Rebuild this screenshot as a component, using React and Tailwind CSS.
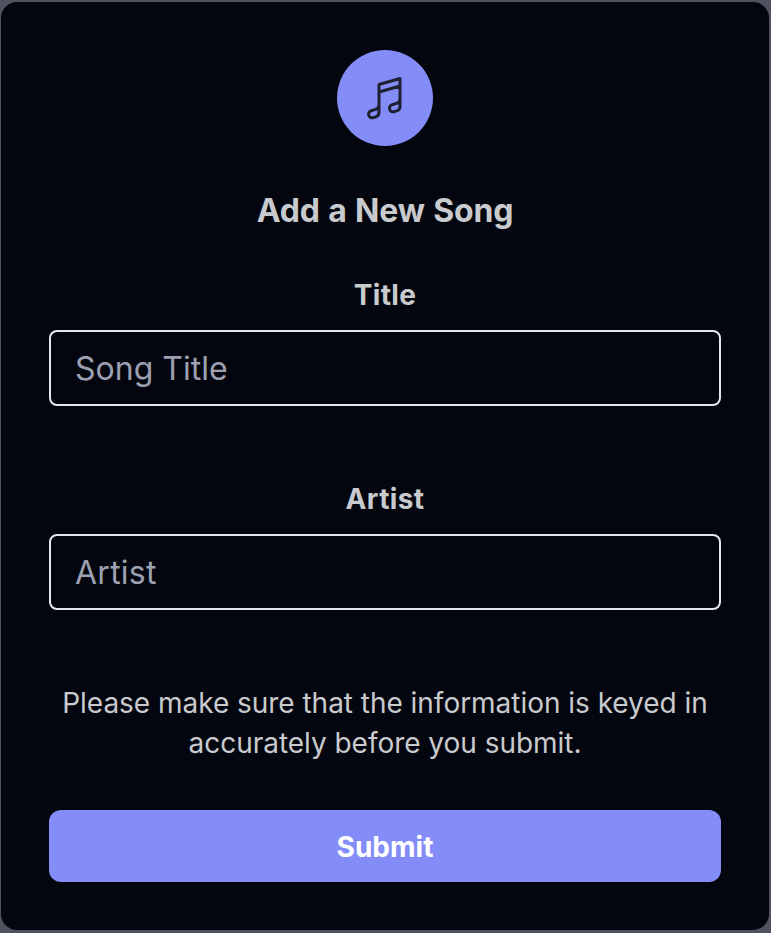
function Field({ label, placeholder, labelClass, inputClass }) {
  return (
    <div className="w-[672px]">
      <label className={`block h-10 text-center text-[28px] leading-10 font-bold ${labelClass}`}>{label}</label>
      <input
        placeholder={placeholder}
        className={`mt-[15px] block h-[76px] w-full rounded-lg border-2 border-[#e5e7eb] bg-transparent px-6 text-[32px] outline-none placeholder:text-[#9ca0b0] ${inputClass}`}
      />
    </div>
  );
}

export default function App() {
  return (
    <div className="h-[933px] w-[771px] bg-[#50525f] pt-0.5 pl-px font-['Inter',sans-serif] text-[#c9cacd]">
      <div className="flex h-[928px] w-[768px] flex-col items-center rounded-2xl bg-[#03060e] pt-12">
        <div className="flex size-24 shrink-0 items-center justify-center rounded-full bg-[#848cf8] text-[#1f2030]">
          <svg className="size-12" viewBox="0 0 24 24" fill="none" stroke="currentColor" strokeWidth="1.5" strokeLinecap="round" strokeLinejoin="round">
            <path d="m9 9 10.5-3m0 6.553v3.75a2.25 2.25 0 0 1-1.632 2.163l-1.32.377a1.803 1.803 0 1 1-.99-3.467l2.31-.66a2.25 2.25 0 0 0 1.632-2.163Zm0 0V2.25L9 5.25v10.303m0 0v3.75a2.25 2.25 0 0 1-1.632 2.163l-1.32.377a1.803 1.803 0 0 1-.99-3.467l2.31-.66A2.25 2.25 0 0 0 9 15.553Z" />
          </svg>
        </div>
        <h3 className="mt-[41px] h-12 text-[32px] leading-12 font-bold tracking-[-0.15px] whitespace-nowrap [word-spacing:1px]">Add a New Song</h3>
        <div className="mt-10"><Field label="Title" placeholder="Song Title" labelClass="tracking-[0.3px]" inputClass="tracking-normal" /></div>
        <div className="mt-[73px]"><Field label="Artist" placeholder="Artist" labelClass="tracking-[0.4px]" inputClass="tracking-[0.25px]" /></div>
        <p className="mt-[73px] w-[672px] text-center text-[28px] leading-10 tracking-[-0.03px]">
          Please make sure that the information is keyed in<br />accurately before you submit.
        </p>
        <button className="mt-[47px] h-[72px] w-[672px] shrink-0 rounded-xl bg-[#848cf8] pt-0.5 text-[28px] font-bold text-white">Submit</button>
      </div>
    </div>
  );
}
